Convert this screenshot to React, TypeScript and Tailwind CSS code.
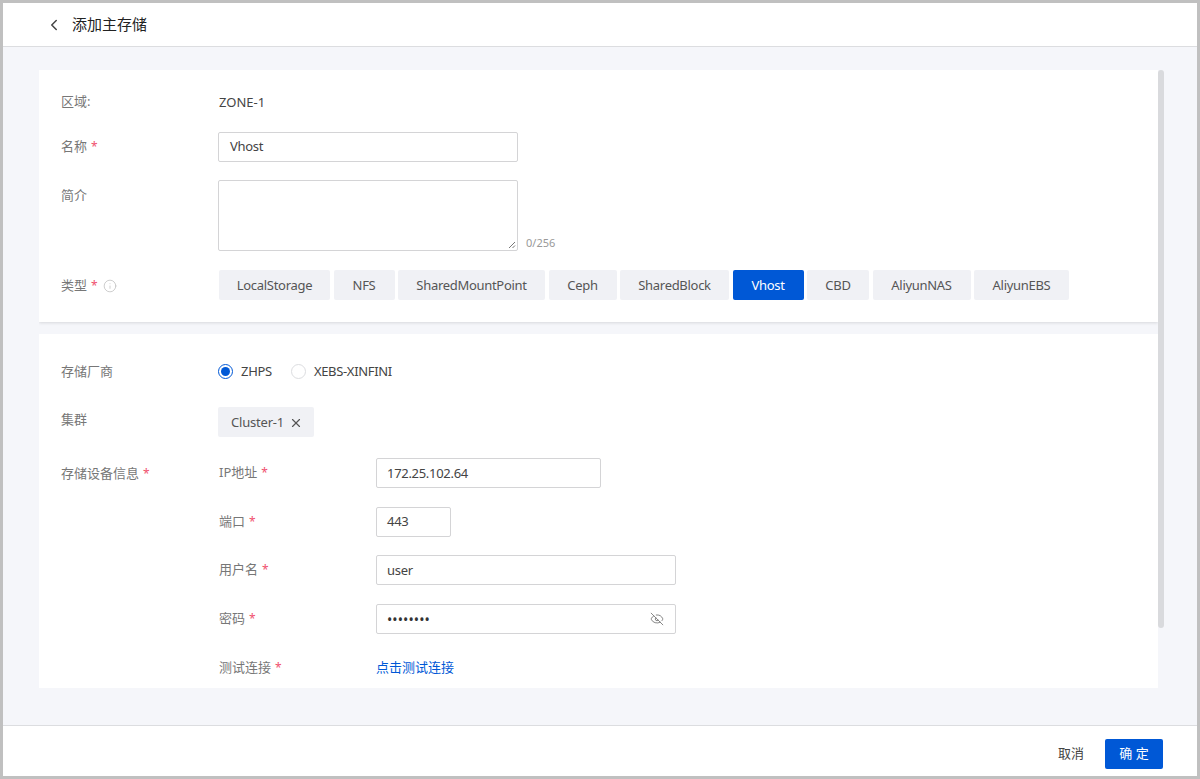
import { ChevronLeft, EyeOff, Info, X } from "lucide-react";

const types = [
  { name: "LocalStorage", width: "w-[111px]" },
  { name: "NFS", width: "w-[61px]" },
  { name: "SharedMountPoint", width: "w-[147px]" },
  { name: "Ceph", width: "w-[68px]" },
  { name: "SharedBlock", width: "w-[109px]" },
  { name: "Vhost", width: "w-[71px]" },
  { name: "CBD", width: "w-[62px]" },
  { name: "AliyunNAS", width: "w-[98px]" },
  { name: "AliyunEBS", width: "w-[95px]" },
];

function Star() {
  return <span className="ml-1 text-[12px] text-[#f0506e]">*</span>;
}

function Input({ value, width }: { value: string; width: string }) {
  return (
    <div className={`flex h-[30px] items-center rounded-[2px] border border-[#d4d4d6] bg-white px-[10px] tracking-[-0.3px] text-[#444] ${width}`}>
      {value}
    </div>
  );
}

function DeviceRow({ label, children, className }: { label: string; children: React.ReactNode; className?: string }) {
  return (
    <div className={`flex h-[30px] items-center ${className ?? ""}`}>
      <div className="w-[157px] text-[#777]">
        {label}
        <Star />
      </div>
      {children}
    </div>
  );
}

export default function App() {
  return (
    <div
      className="flex h-[779px] w-[1200px] flex-col overflow-hidden border-[3px] border-[#c0c0c0] bg-white text-[13px] text-[#444]"
      style={{ fontFamily: '"Noto Sans", "Noto Sans CJK SC", sans-serif' }}
    >
      {/* Header */}
      <div className="flex h-[44px] shrink-0 items-center border-b border-[#dcdde0] pl-[42px]">
        <ChevronLeft size={18} strokeWidth={2} className="text-[#444]" />
        <span className="ml-[9px] text-[15px] text-[#222]">添加主存储</span>
      </div>

      {/* Content */}
      <div className="relative min-h-0 flex-1 bg-[#f5f6fa] pl-[36px] pt-[23px]">
        <div className="h-[618px] w-[1119px] overflow-hidden">
          <div className="h-[252px] bg-white pl-[22px] pt-[17px] shadow-[0_1px_3px_rgba(0,0,0,0.12)]">
            <div className="flex h-[30px] items-center">
              <div className="w-[158px] text-[#777]">区域:</div>
              <div className="pt-[1px]">ZONE-1</div>
            </div>
            <div className="mt-[15px] flex h-[30px] items-center">
              <div className="w-[157px] text-[#777]">
                名称
                <Star />
              </div>
              <Input value="Vhost" width="w-[300px] pl-[11px]" />
            </div>
            <div className="mt-[18px] flex items-start">
              <div className="mt-[6px] w-[157px] text-[#777]">简介</div>
              <div className="relative h-[71px] w-[300px] rounded-[2px] border border-[#d4d4d6] bg-white">
                <svg className="absolute bottom-[1px] right-[1px]" width="8" height="8" viewBox="0 0 8 8" stroke="#777" strokeWidth="1">
                  <path d="M1 7 L7 1 M4.5 7 L7 4.5" />
                </svg>
              </div>
              <div className="ml-[8px] mt-[55px] text-[11px] text-[#999]">0/256</div>
            </div>
            <div className="mt-[18px] flex h-[31px] items-center">
              <div className="flex w-[158px] items-center pt-[1px] text-[#777]">
                类型
                <Star />
                <Info size={14} strokeWidth={1.25} className="ml-[5px] text-[#bbb]" />
              </div>
              <div className="flex gap-[3.5px]">
                {types.map((t) => (
                  <div
                    key={t.name}
                    className={`flex h-[30px] items-center justify-center rounded-[2px] pt-[1px] tracking-[-0.3px] ${t.width} ${
                      t.name === "Vhost" ? "bg-[#0058d6] text-white" : "bg-[#f0f1f5] text-[#555]"
                    }`}
                  >
                    {t.name}
                  </div>
                ))}
              </div>
            </div>
          </div>

          <div className="mt-[12px] h-[400px] bg-white pl-[22px] pt-[22px]">
            <div className="flex h-[30px] items-center pt-[1px]">
              <div className="w-[157px] text-[#777]">存储厂商</div>
              <div className="flex h-[15px] w-[15px] items-center justify-center rounded-full border border-[#0058d6]">
                <div className="h-[9px] w-[9px] rounded-full bg-[#0058d6]" />
              </div>
              <span className="ml-[8px] tracking-[-0.3px]">ZHPS</span>
              <div className="ml-[19px] h-[15px] w-[15px] rounded-full border border-[#dcdde0]" />
              <span className="ml-[8px] tracking-[-0.33px]">XEBS-XINFINI</span>
            </div>
            <div className="mt-[21px] flex h-[30px] items-center">
              <div className="-mt-[4px] w-[157px] text-[#777]">集群</div>
              <div className="flex h-[30px] w-[96px] items-center gap-[5px] rounded-[2px] bg-[#f0f1f5] pl-[13px] pt-[1px] tracking-[-0.2px] text-[#555]">
                Cluster-1
                <X size={14} strokeWidth={2} />
              </div>
            </div>
            <div className="mt-[21px] flex items-start">
              <div className="mt-[6px] w-[158px] text-[#777]">
                存储设备信息
                <Star />
              </div>
              <div>
                <DeviceRow label="IP地址">
                  <Input value="172.25.102.64" width="w-[225px] pt-[1px]" />
                </DeviceRow>
                <DeviceRow label="端口" className="mt-[19px]">
                  <Input value="443" width="w-[75px]" />
                </DeviceRow>
                <DeviceRow label="用户名" className="mt-[18px]">
                  <Input value="user" width="w-[300px] pt-[1px]" />
                </DeviceRow>
                <DeviceRow label="密码" className="mt-[19px]">
                  <div className="flex h-[30px] w-[300px] items-center justify-between rounded-[2px] border border-[#d4d4d6] pl-[10px] pr-[11px]">
                    <span className="text-[14px] tracking-[0.1px] text-[#333]">••••••••</span>
                    <EyeOff size={14} strokeWidth={1.5} className="text-[#777]" />
                  </div>
                </DeviceRow>
                <DeviceRow label="测试连接" className="mt-[19px]">
                  <span className="text-[#0058d6]">点击测试连接</span>
                </DeviceRow>
              </div>
            </div>
          </div>
        </div>
        {/* Scrollbar thumb */}
        <div className="absolute left-[1155px] top-[23px] h-[558px] w-[6px] rounded-[3px] bg-[#d9dadd]" />
      </div>

      {/* Footer */}
      <div className="flex h-[51px] shrink-0 items-start justify-end border-t border-[#dcdde0] pr-[34px] pt-[13px]">
        <span className="mt-[5px] text-[#444]">取消</span>
        <button className="ml-[21px] h-[30px] w-[58px] rounded-[2px] bg-[#0058d6] text-white">确 定</button>
      </div>
    </div>
  );
}
